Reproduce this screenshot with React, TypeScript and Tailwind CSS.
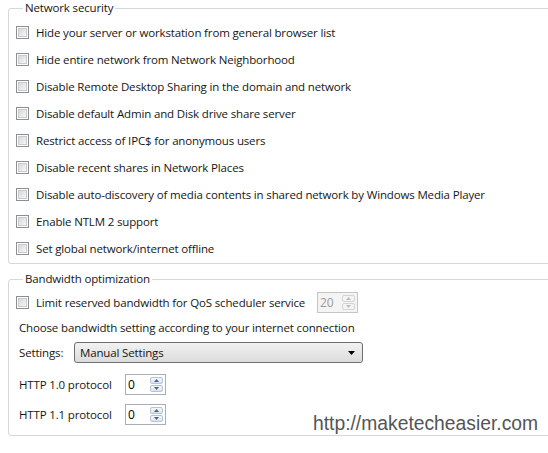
import type { ReactNode } from "react"

const security = [
  "Hide your server or workstation from general browser list",
  "Hide entire network from Network Neighborhood",
  "Disable Remote Desktop Sharing in the domain and network",
  "Disable default Admin and Disk drive share server",
  "Restrict access of IPC$ for anonymous users",
  "Disable recent shares in Network Places",
  "Disable auto-discovery of media contents in shared network by Windows Media Player",
  "Enable NTLM 2 support",
  "Set global network/internet offline",
]

function Check() {
  return (
    <span className="flex h-[13px] w-[13px] shrink-0 items-center justify-center border border-[#8e8f8f] bg-white">
      <span className="h-[9px] w-[9px] border border-[#c9cbcc] bg-gradient-to-br from-[#d6d8da] to-[#f7f7f7]" />
    </span>
  )
}

function Spinner({ value, disabled }: { value: string; disabled?: boolean }) {
  const arrow = disabled ? "#b8bcc0" : "#4d6185"
  return (
    <div
      className={`flex h-[21px] w-[41px] items-stretch border ${
        disabled
          ? "border-[#c5c5c5] bg-[#f4f4f4] text-[#9a9a9a]"
          : "border-[#abadb3] bg-white text-black"
      }`}
    >
      <span className="flex-1 pl-[2px] text-[12px] leading-[19px]">{value}</span>
      <div className="my-[2px] mr-[2px] flex w-[13px] flex-col gap-px">
        {[0, 1].map((i) => (
          <span
            key={i}
            className={`flex flex-1 items-center justify-center rounded-[2px] border ${
              disabled
                ? "border-[#d4d4d4] bg-[#f4f4f4]"
                : "border-[#b9c4d2] bg-gradient-to-b from-[#f6f8fb] to-[#dde4ee]"
            }`}
          >
            <svg width="5" height="3" viewBox="0 0 5 3">
              <path d={i === 0 ? "M0 3 L2.5 0 L5 3Z" : "M0 0 L2.5 3 L5 0Z"} fill={arrow} />
            </svg>
          </span>
        ))}
      </div>
    </div>
  )
}

function Group({ title, className, children }: { title: string; className: string; children: ReactNode }) {
  return (
    <fieldset className={`ml-2 w-[560px] rounded-[3px] border border-[#d5d9dc] pl-[7px] ${className}`}>
      <legend className="ml-[7px] px-[2px] leading-4">{title}</legend>
      {children}
    </fieldset>
  )
}

export default function App() {
  return (
    <div
      className="relative h-[453px] w-[548px] overflow-hidden bg-white text-[11.5px] tracking-[-0.15px] text-[#161616]"
      style={{ fontFamily: '"Open Sans", "Noto Sans", sans-serif' }}
    >
      <Group title="Network security" className="pt-[3px] pb-[1px]">
        {security.map((s) => (
          <label key={s} className="flex h-[27px] items-center gap-[7px]">
            <Check />
            <span>{s}</span>
          </label>
        ))}
      </Group>

      <Group title="Bandwidth optimization" className="mt-[7px] pb-[10px]">
        <div className="mt-[5px] flex h-[21px] items-center">
          <label className="flex w-[301px] items-center gap-[7px]">
            <Check />
            <span>Limit reserved bandwidth for QoS scheduler service</span>
          </label>
          <Spinner value="20" disabled />
        </div>
        <div className="mt-[7px] pl-[3px] leading-4">Choose bandwidth setting according to your internet connection</div>
        <div className="mt-[6px] flex h-[21px] items-center pl-[3px]">
          <span className="w-[55px]">Settings:</span>
          <div className="flex h-[21px] w-[289px] items-center justify-between rounded-[3px] border border-[#707070] bg-gradient-to-b from-[#f2f2f2] to-[#dcdcdc] pr-[7px] pl-[5px]">
            <span>Manual Settings</span>
            <svg width="7" height="4" viewBox="0 0 7 4">
              <path d="M0 0 L7 0 L3.5 4Z" fill="#000" />
            </svg>
          </div>
        </div>
        <div className="mt-[11px] flex h-[21px] items-center pl-[3px]">
          <span className="w-[106px]">HTTP 1.0 protocol</span>
          <Spinner value="0" />
        </div>
        <div className="mt-[9px] flex h-[21px] items-center pl-[3px]">
          <span className="w-[106px]">HTTP 1.1 protocol</span>
          <Spinner value="0" />
        </div>
      </Group>

      <div
        className="absolute top-[413px] left-[313px] text-[19.3px] leading-[22px] tracking-normal text-[#555]"
        style={{ fontFamily: '"Liberation Sans", Arial, sans-serif' }}
      >
        http://maketecheasier.com
      </div>
    </div>
  )
}
